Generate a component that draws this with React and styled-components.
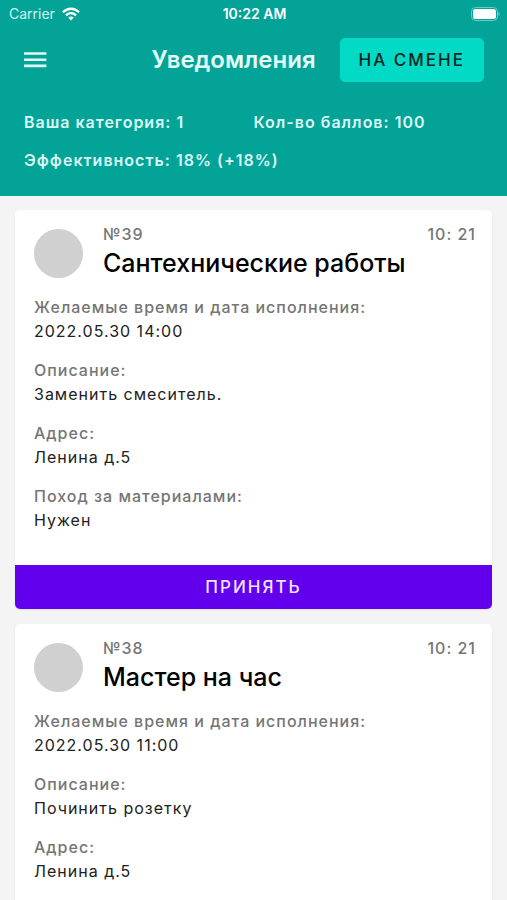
import React from 'react';
import styled, { createGlobalStyle } from 'styled-components';

const GlobalStyle = createGlobalStyle`
  * {
    box-sizing: border-box;
  }

  body {
    margin: 0;
    background: #f4f4f4;
    font-family: Inter, 'Liberation Sans', sans-serif;
  }

  button {
    border: 0;
    cursor: pointer;
    font-family: inherit;
  }
`;

const Screen = styled.div`
  display: flex;
  flex-direction: column;
  height: 100vh;
`;

const Header = styled.header`
  flex-shrink: 0;
  padding-bottom: 24px;
  background: #03a398;
  color: white;
`;

const StatusBar = styled.div`
  display: grid;
  grid-template-columns: 1fr auto 1fr;
  align-items: center;
  height: 27px;
  padding: 0 7px 0 9px;
  font-size: 14px;

  .carrier {
    display: flex;
    align-items: center;
    gap: 7px;
    color: #d3f3f0;
  }

  .clock {
    font-weight: 600;
  }

  .battery {
    justify-self: end;
  }
`;

const TopBar = styled.div`
  display: flex;
  align-items: center;
  height: 66px;
  padding: 0 23px;
`;

const MenuButton = styled.button`
  display: flex;
  padding: 0;
  background: none;
  color: #e4fbf9;
`;

const Title = styled.h1`
  margin: 0 24px 0 auto;
  font-size: 24px;
  font-weight: 600;
  line-height: 32px;
  color: #e4fbf9;
`;

const Button = styled.button`
  height: 44px;
  padding: 0 19px;
  font-size: 17px;
  font-weight: 500;
  letter-spacing: 2px;
  white-space: nowrap;
`;

const ShiftButton = styled(Button)`
  border-radius: 5px;
  background: #03dac6;
  color: #06241f;
`;

const AcceptButton = styled(Button)`
  width: 100%;
  background: #6200ee;
  color: #efe4fd;
`;

const Stats = styled.div`
  display: grid;
  grid-template-columns: 1fr 1fr;
  row-gap: 14px;
  padding: 17px 24px 0;
  font-size: 16px;
  font-weight: 600;
  line-height: 24px;
  letter-spacing: 1px;
  color: #d9f8f5;

  .wide {
    grid-column: 1 / -1;
  }
`;

const List = styled.main`
  flex: 1;
  display: flex;
  flex-direction: column;
  gap: 15px;
  padding: 14px 15px;
  overflow-y: auto;
  scrollbar-width: none;
`;

const CardBlock = styled.article`
  flex-shrink: 0;
  border-radius: 5px;
  background: white;
  box-shadow: 0 1px 2px rgba(0, 0, 0, 0.08);
  overflow: hidden;
`;

const CardHeader = styled.div`
  display: flex;
  gap: 20px;
  padding: 12px 16px 0 19px;
`;

const Avatar = styled.div`
  flex-shrink: 0;
  width: 49px;
  height: 49px;
  margin-top: 7px;
  border-radius: 50%;
  background: #d0d0d0;
`;

const Heading = styled.div`
  flex: 1;

  .meta {
    display: flex;
    justify-content: space-between;
    font-size: 16px;
    font-weight: 500;
    line-height: 24px;
    letter-spacing: 1px;
    color: #757575;
  }

  h2 {
    margin: 0;
    font-size: 25px;
    font-weight: 500;
    line-height: 34px;
    color: black;
  }
`;

const Fields = styled.dl`
  display: flex;
  flex-direction: column;
  gap: 15px;
  margin: 0;
  padding: 15px 19px 33px;
  font-size: 16px;
  line-height: 24px;
  letter-spacing: 1px;

  dt {
    font-weight: 500;
    color: #757575;
  }

  dd {
    margin: 0;
    color: #212121;
  }
`;

const orders = [
  {
    id: 39,
    time: '10: 21',
    title: 'Сантехнические работы',
    date: '2022.05.30 14:00',
    description: 'Заменить смеситель.',
    address: 'Ленина д.5',
    materials: 'Нужен',
  },
  {
    id: 38,
    time: '10: 21',
    title: 'Мастер на час',
    date: '2022.05.30 11:00',
    description: 'Починить розетку',
    address: 'Ленина д.5',
  },
];

const WifiIcon = () => (
  <svg width="18" height="14" viewBox="0 0 18 14" fill="none" stroke="white" strokeWidth="2.3">
    <path d="M1 5.2C5.6.6 12.4.6 17 5.2" />
    <path d="M4 8.3C6.9 5.5 11.1 5.5 14 8.3" />
    <path d="M6.2 10.6C7.8 9.1 10.2 9.1 11.8 10.6L9 13.6Z" fill="white" stroke="none" />
  </svg>
);

const BatteryIcon = () => (
  <svg className="battery" width="30" height="14" viewBox="0 0 30 14">
    <rect x="1.5" y="0.5" width="26" height="13" rx="4" fill="none" stroke="#6fcac4" />
    <rect x="3" y="2" width="23" height="10" rx="2.5" fill="white" />
    <path d="M28.5 4.8c1.6.7 1.6 3.7 0 4.4Z" fill="#6fcac4" />
  </svg>
);

const MenuIcon = () => (
  <svg width="24" height="24" viewBox="0 0 24 24" fill="currentColor">
    <path d="M1 4.2h22.4v2.6H1zM1 10.4h22.4V13H1zM1 16.6h22.4v2.6H1z" />
  </svg>
);

const Field = ({ label, value }) => (
  <div>
    <dt>{label}:</dt>
    <dd>{value}</dd>
  </div>
);

const OrderCard = ({ order }) => {
  return (
    <CardBlock>
      <CardHeader>
        <Avatar />
        <Heading>
          <div className="meta">
            <span>№{order.id}</span>
            <span>{order.time}</span>
          </div>
          <h2>{order.title}</h2>
        </Heading>
      </CardHeader>
      <Fields>
        <Field label="Желаемые время и дата исполнения" value={order.date} />
        <Field label="Описание" value={order.description} />
        <Field label="Адрес" value={order.address} />
        {order.materials && <Field label="Поход за материалами" value={order.materials} />}
      </Fields>
      <AcceptButton type="button">ПРИНЯТЬ</AcceptButton>
    </CardBlock>
  );
};

const App = () => {
  return (
    <>
      <GlobalStyle />
      <Screen>
        <Header>
          <StatusBar>
            <span className="carrier">
              Carrier
              <WifiIcon />
            </span>
            <span className="clock">10:22 AM</span>
            <BatteryIcon />
          </StatusBar>
          <TopBar>
            <MenuButton type="button" aria-label="Меню">
              <MenuIcon />
            </MenuButton>
            <Title>Уведомления</Title>
            <ShiftButton type="button">НА СМЕНЕ</ShiftButton>
          </TopBar>
          <Stats>
            <span>Ваша категория: 1</span>
            <span>Кол-во баллов: 100</span>
            <span className="wide">Эффективность: 18% (+18%)</span>
          </Stats>
        </Header>
        <List>
          {orders.map((order) => (
            <OrderCard key={order.id} order={order} />
          ))}
        </List>
      </Screen>
    </>
  );
};

export default App;
